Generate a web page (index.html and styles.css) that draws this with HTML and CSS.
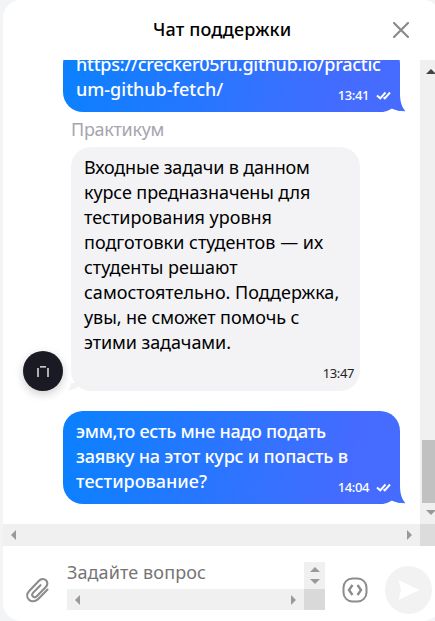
FILE: index.html
```html
<!DOCTYPE html>
<html lang="ru">
<head>
<meta charset="utf-8">
<title>Чат поддержки</title>
<link rel="stylesheet" href="styles.css">
</head>
<body>
<main class="chat">
  <header class="head">
    <h1 class="title">Чат поддержки</h1>
    <svg class="close" width="16" height="16" viewBox="0 0 16 16"><path d="M1 1l14 14M15 1L1 15" stroke="#8b8b8b" stroke-width="2.2" stroke-linecap="round"/></svg>
  </header>
  <section class="body">
    <div class="feed">
      <article class="bubble mine">
        <p class="text"><span class="line a1">https://crecker05ru.github.io/practic</span><span class="line a2">um-github-fetch/</span></p>
        <div class="meta"><time class="time">13:41</time><svg class="checks" width="15" height="9" viewBox="0 0 15 9"><path d="M1 4.500l3.200 2.800L9.500 1.500M7.600 6.200l1.200 1.100L14 1.500" fill="none" stroke="#fff" stroke-width="1.900"/></svg></div>
        <svg class="tail" width="23" height="19" viewBox="0 0 23 19"><path class="notch" d="M0 19Q5 18 9 15.500Q14 18 22.500 18.300V19Z"/><path d="M17 0C17 8 18.500 14 22.500 18.300Q14 18 9 15.500L12 0Z" fill="#456bff"/></svg>
      </article>
      <p class="author">Практикум</p>
      <div class="row">
        <div class="avatar"><svg width="12" height="11" viewBox="0 0 12 11"><path d="M1 2v9M11 2v9M3 .8h6" stroke="#fff" stroke-width="1.3" fill="none"/></svg></div>
        <article class="bubble theirs">
          <p class="text"><span class="line b1">Входные задачи в данном</span><span class="line b2">курсе предназначены для</span><span class="line b3">тестирования уровня</span><span class="line b4">подготовки студентов — их</span><span class="line b5">студенты решают</span><span class="line b6">самостоятельно. Поддержка,</span><span class="line b7">увы, не сможет помочь с</span><span class="line b8">этими задачами.</span></p>
          <time class="time">13:47</time>
          <svg class="tail-left" width="22" height="8" viewBox="0 0 22 8"><path d="M5 0v3L0 8h22Q16 7 12.500 4L5 7Z" fill="#fff"/><path d="M5 0Q5 5 1 7.300Q8 7 12.500 4V0Z" fill="#f3f3f6"/></svg>
        </article>
      </div>
      <article class="bubble mine last">
        <p class="text"><span class="line c1">эмм,то есть мне надо подать</span><span class="line c2">заявку на этот курс и попасть в</span><span class="line c3">тестирование?</span></p>
        <div class="meta"><time class="time">14:04</time><svg class="checks" width="15" height="9" viewBox="0 0 15 9"><path d="M1 4.500l3.200 2.800L9.500 1.500M7.600 6.200l1.200 1.100L14 1.500" fill="none" stroke="#fff" stroke-width="1.900"/></svg></div>
        <svg class="tail" width="23" height="19" viewBox="0 0 23 19"><path class="notch" d="M0 19Q5 18 9 15.500Q14 18 22.500 18.300V19Z"/><path d="M17 0C17 8 18.500 14 22.500 18.300Q14 18 9 15.500L12 0Z" fill="#456bff"/></svg>
      </article>
    </div>
    <div class="vbar">
      <i class="arrow up dark"></i>
      <div class="thumb"></div>
      <i class="arrow down"></i>
    </div>
    <div class="hbar"><i class="arrow left"></i><i class="arrow right"></i></div>
    <div class="corner"></div>
  </section>
  <footer class="composer">
    <svg class="clip" width="24" height="26" viewBox="0 0 24 26"><path d="M21.500 12.500L12.500 21.800C9.500 24.900 5.500 25 3 22.700C.4 20.200.7 16.600 3.200 14L13 3.800C15 1.700 18 1.400 20 3.300C22 5.200 21.700 8.100 19.800 10L10.800 19.200C9.500 20.500 7.900 20.400 6.900 19.500C5.800 18.400 6 16.900 7.200 15.600L14.500 8.200" fill="none" stroke="#8c8c8c" stroke-width="2.100" stroke-linecap="round"/></svg>
    <div class="input">
      <div class="placeholder"><span>Задайте вопрос</span></div>
      <div class="mini-v"><i class="arrow up"></i><i class="arrow down"></i></div>
      <div class="mini-h"><i class="arrow left"></i><i class="arrow right"></i></div>
      <div class="corner"></div>
    </div>
    <svg class="code" width="26" height="26" viewBox="0 0 26 26" fill="none" stroke="#8c8c8c" stroke-width="2"><rect x="1.500" y="1.500" width="23" height="23" rx="9"/><path d="M10.500 8L7 13L10.500 18M15.500 8L19 13L15.500 18" stroke-width="2.400"/></svg>
    <div class="send"><svg width="22" height="20" viewBox="0 0 22 20"><path d="M.5 0L21.500 10L.5 20L3 10Z" fill="#fff"/></svg></div>
  </footer>
</main>
</body>
</html>
```
FILE: styles.css
```css
* { box-sizing: border-box; }
body { margin: 0; height: 621px; overflow: hidden; background: #f3f4f5; font-family: "Noto Sans", "Open Sans", sans-serif; }
h1, p { margin: 0; }
svg { display: block; flex: none; }
.chat { margin-left: 3px; width: 438px; height: 621px; background: #fff; border-radius: 18px; overflow: hidden; display: grid; grid-template-rows: 60px 486px 75px; }
.head { display: grid; grid-template-columns: 150px 1fr 16px; padding-right: 32px; align-items: center; }
.title { grid-column: 2; margin-top: -3px; font-size: 18px; line-height: 24px; font-weight: 500; letter-spacing: .13px; color: #000; white-space: nowrap; }
.body { width: 432px; display: grid; grid-template-columns: 417px 15px; grid-template-rows: 464px 22px; }
.feed { height: 464px; overflow: hidden; display: flex; flex-direction: column; justify-content: flex-end; padding-bottom: 20px; }
.bubble { position: relative; flex: none; border-radius: 20px; padding: 8px 13px 10px; font-size: 18px; }
.mine { width: 337px; margin-left: 60px; color: #fff; font-weight: 500; background: linear-gradient(100deg, #0d80ff 5%, #456bff 85%); border-bottom-right-radius: 0; }
.last { height: 93px; margin-top: 20px; }
.line { display: block; height: 25px; line-height: 25px; white-space: nowrap; }
.a1 { letter-spacing: -.25px; }
.a2 { letter-spacing: 0; }
.b1 { letter-spacing: -.17px; }
.b2 { letter-spacing: -.1px; }
.b7, .b8 { letter-spacing: -.08px; }
.c1 { letter-spacing: -.3px; }
.c2 { letter-spacing: -.2px; }
.c3 { letter-spacing: 0; }
.meta { position: absolute; right: 9px; bottom: 8px; display: flex; gap: 8px; align-items: center; }
.time { font-size: 13px; line-height: 18px; letter-spacing: -.4px; }
.meta .time { margin-right: -1px; }
.tail { position: absolute; right: -6px; bottom: 0; }
.notch { fill: #fff; }
.author { flex: none; height: 35px; padding: 5px 0 0 68px; font-size: 18px; line-height: 25px; letter-spacing: -.3px; color: #a5a5b0; }
.row { flex: none; display: flex; align-items: flex-end; padding-left: 20px; gap: 8px; }
.avatar { width: 40px; height: 40px; border-radius: 50%; background: #191a23; box-shadow: 0 3px 10px #0003; display: grid; place-items: center; flex: none; }
.theirs { width: 289px; height: 244px; background: #f3f3f6; color: #000; }
.theirs .time { position: absolute; right: 6px; bottom: 9px; color: #222; }
.tail-left { position: absolute; left: -5px; bottom: 0; }
.vbar { background: #f0f0f0; display: flex; flex-direction: column; align-items: center; padding-top: 9px; }
.thumb { width: 13px; height: 63px; background: #c1c1c1; margin: 366px 0 7px 2px; flex: none; }
.vbar .arrow { margin-left: 6px; }
.hbar { background: #f0f0f0; display: flex; justify-content: space-between; align-items: center; padding: 0 8px; }
.corner { background: #dcdcdc; }
.arrow { width: 0; height: 0; border: 5px solid transparent; flex: none; }
.up { border-top: 0; border-bottom-color: #999; }
.down { border-bottom: 0; border-top-color: #999; }
.left { border-left: 0; border-right-color: #999; }
.right { border-right: 0; border-left-color: #999; }
.dark { border-bottom-color: #444; }
.composer { width: 432px; display: flex; align-items: flex-start; padding-left: 23px; }
.clip { margin-top: 31px; }
.input { margin: 16px 0 0 17px; width: 258px; display: grid; grid-template-columns: 237px 21px; grid-template-rows: 27px 21px; flex: none; }
.placeholder { color: #757575; font-size: 18px; line-height: 20px; letter-spacing: .1px; white-space: nowrap; }
.mini-v { background: #f0f0f0; display: flex; flex-direction: column; align-items: center; padding-top: 5px; gap: 7px; }
.mini-h { background: #f0f0f0; display: flex; justify-content: space-between; align-items: center; padding: 0 8px; }
.input .corner { background: #d9d9d9; }
.code { margin: 31px 0 0 17px; }
.send { margin: 20px 0 0 17px; width: 47px; height: 48px; border-radius: 50%; background: #f2f2f2; display: grid; place-items: center; flex: none; }
```
